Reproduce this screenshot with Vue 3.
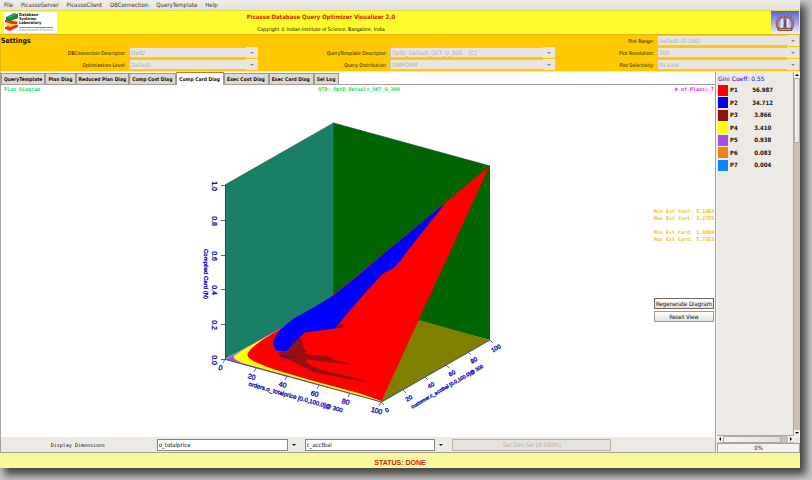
<script setup>
import { ref } from 'vue'

const menus = ['File', 'PicassoServer', 'PicassoClient', 'DBConnection', 'QueryTemplate', 'Help']

const settings = [
  { id: 'range', label: 'Plot Range:', value: 'Default (0-100)', area: 'c1' },
  { id: 'conn', label: 'DBConnection Descriptor:', value: 'OptD', area: 'a2' },
  { id: 'qt', label: 'QueryTemplate Descriptor:', value: 'OptD_Default_Q07_U_300\u00a0\u00a0\u00a0 [C]', area: 'b2' },
  { id: 'res', label: 'Plot Resolution:', value: '300', area: 'c2' },
  { id: 'opt', label: 'Optimization Level:', value: 'Default', area: 'a3' },
  { id: 'dist', label: 'Query Distribution:', value: 'UNIFORM', area: 'b3' },
  { id: 'sel', label: 'Plot Selectivity:', value: 'Picasso', area: 'c3' },
]

const tabs = ['QueryTemplate', 'Plan Diag', 'Reduced Plan Diag', 'Comp Cost Diag', 'Comp Card Diag', 'Exec Cost Diag', 'Exec Card Diag', 'Sel Log']
const active = ref('Comp Card Diag')

const plans = [
  { name: 'P1', value: '56.987', color: '#ff0000' },
  { name: 'P2', value: '34.712', color: '#0000f0' },
  { name: 'P3', value: '3.866', color: '#961010' },
  { name: 'P4', value: '3.410', color: '#ffff00' },
  { name: 'P5', value: '0.938', color: '#a552d8' },
  { name: 'P6', value: '0.083', color: '#ec860c' },
  { name: 'P7', value: '0.004', color: '#0a86ff' },
]

const zTicks = [
  { t: '1.0', y: 185 }, { t: '0.8', y: 220 }, { t: '0.6', y: 255 },
  { t: '0.4', y: 289 }, { t: '0.2', y: 324 }, { t: '0.0', y: 359 },
]
const xTicks = [
  { t: '0', x: 225, y: 359 }, { t: '20', x: 256, y: 368 }, { t: '40', x: 287, y: 376 },
  { t: '60', x: 319, y: 385 }, { t: '80', x: 350, y: 393 }, { t: '100', x: 381, y: 402 },
]
const yTicks = [
  { t: '0', x: 381, y: 402 }, { t: '20', x: 403, y: 390 }, { t: '40', x: 425, y: 377 },
  { t: '60', x: 446, y: 365 }, { t: '80', x: 468, y: 352 }, { t: '100', x: 490, y: 340 },
]
</script>

<template>
  <div class="window">
    <nav class="menubar">
      <button v-for="m in menus" :key="m" type="button">{{ m }}</button>
    </nav>

    <header class="banner">
      <div class="lab">
        <svg class="lab-mark" viewBox="0 0 14 18" aria-hidden="true">
          <path d="M0 14l8-3 5 1v2l-8 4-5-2z" fill="#e03a2c" />
          <path d="M1 10l9-3 3 1v3l-8 3-4-2z" fill="#f2d43a" />
          <path d="M0 7l4 0 8 2v2l-5 0-7-2z" fill="#d8342c" />
          <path d="M1 4l8-4 4 1v4l-8 3-4-1z" fill="#35a04c" />
          <path d="M1 4l4 1 8-4v4l-8 3-4-1z" fill="#23813a" />
        </svg>
        <div class="lab-text">
          <b>Database</b><b>Systems</b><b>Laboratory</b>
          <span>Indian Institute of Science</span>
        </div>
      </div>
      <div class="titles">
        <h1>Picasso Database Query Optimizer Visualizer 2.0</h1>
        <p>Copyright © Indian Institute of Science, Bangalore, India</p>
      </div>
      <svg class="crest" viewBox="0 0 28 23" aria-hidden="true">
        <defs>
          <linearGradient id="sky" x1="0" y1="0" x2="0" y2="1">
            <stop offset="0" stop-color="#5a5cd8" />
            <stop offset="1" stop-color="#f0f0ff" />
          </linearGradient>
        </defs>
        <rect width="28" height="23" fill="url(#sky)" />
        <path d="M8 18a8 8 0 1 1 12 0" fill="none" stroke="#8a5a48" stroke-width="2.6" />
        <path d="M8 18a8 8 0 1 1 12 0" fill="none" stroke="#d9b49c" stroke-width="0.8" stroke-dasharray="2 1" />
        <path d="M11 8v8M17 8v8" stroke="#e8e0f0" stroke-width="2" />
        <path d="M14 4l1.500 12h-3z" fill="#7a4a40" />
        <path d="M6 17h5l3-1 3 1h5l-1 3H7z" fill="#7d5648" />
        <path d="M8 18.500h12" stroke="#d8b090" stroke-width="0.8" />
      </svg>
    </header>

    <section class="settings">
      <h2>Settings</h2>
      <template v-for="s in settings" :key="s.id">
        <label :for="s.id" :class="['s-label', 'l-' + s.area]">{{ s.label }}</label>
        <div :class="['combo', 'off', 'f-' + s.area]">
          <select :id="s.id" disabled><option>{{ s.value }}</option></select>
          <svg viewBox="0 0 6 4" aria-hidden="true"><path d="M1 1h4L3 3z" /></svg>
        </div>
      </template>
    </section>

    <div class="work">
      <main class="left">
        <div class="tabs" role="tablist">
          <button
            v-for="t in tabs" :key="t" type="button" role="tab"
            :class="{ on: t === active }" :aria-selected="t === active" @click="active = t"
          >{{ t }}</button>
        </div>

        <div class="diagram">
          <div class="caption">
            <span class="green">Plan Diagram</span>
            <span class="green">QTD: OptD_Default_Q07_U_300</span>
            <span class="count"># of Plans: 7</span>
          </div>
          <div class="canvas">
            <svg class="plot" viewBox="1 93 653 344">
              <polygon points="225,185 334,123 334,300 225,359" fill="#1a7f67" />
              <polygon points="333.5,123 490,166 490,340 333.5,300" fill="#006400" />
              <polygon points="419,320 490,340 382,402 370,390" fill="#808000" />
              <path d="M225 185L333.5 123L490 166" fill="none" stroke="#114b35" stroke-width="0.7" />
              <polygon points="225,359.5 300,317 381.500,402" fill="#a552d8" />
              <path d="M325 302L300 317.500C275 333 240 350 234 356Q232 359 242 363L381.500 401.500L340 350Z" fill="#ffff00" />
              <path d="M489.500 166L445 203L333 295.500L303 316C280 329 247 347 247.500 355C248 361 268 368 310 380L360 393.500L381.500 401Z" fill="#ff0000" />
              <path d="M445.500 202.700L376.500 260L360 274L333.500 295.500L313 307.700L293 319L282 328Q272 338 273.500 345L276 350.500L286.500 351.500L297 340L305 332.500L335 328.500L347 314L350 310.500L365 293L377 280L383 273.500L393 268.500L400 261.500L407 251.500L440 210Z" fill="#0000ff" />
              <path d="M335 328.500L340 323.500L345 325.500L343 327.500Z" fill="#961010" />
              <path d="M300 337L303.500 344.500L302 346L307 351.500L304 352.500L310 355L325 356L333 357.500L332 359.500L350 363.500L348 364.500L307 359.500L305 361.500L313 366.500L323 370.500L350 376.500L367 381.500L360 381L330 375.500L313 372L300 365L280 356L278 352L286.500 351.500Z" fill="#961010" />
              <path d="M280 356L293 357.500" stroke="#1010c0" stroke-width="0.8" />
              <path d="M225.500 185V359.500L381.500 402L490 340" fill="none" stroke="#2c3c78" stroke-width="0.8" />
              <g class="ticks">
                <path v-for="z in zTicks" :key="z.t" :d="`M221 ${z.y + 0.5}h4`" />
                <path v-for="x in xTicks" :key="x.t" :d="`M${x.x} ${x.y}l-2 4`" />
                <path v-for="y in yTicks" :key="y.t" :d="`M${y.x} ${y.y}l3 3`" />
              </g>
              <g class="axis">
                <text v-for="z in zTicks" :key="z.t" class="big" :transform="`translate(212 ${z.y + 1}) rotate(90)`">{{ z.t }}</text>
                <text v-for="x in xTicks" :key="x.t" class="big" :transform="`translate(${x.x - 5} ${x.y + 11}) rotate(16)`">{{ x.t }}</text>
                <text v-for="y in yTicks" :key="y.t" :transform="`translate(${y.x + 7} ${y.y + 10}) rotate(-30)`">{{ y.t }}</text>
                <text transform="translate(204 274) rotate(90)">Compiled Card (N)</text>
                <text transform="translate(295 399) rotate(16)">orders.o_totalprice [0.0,100.0]@ 300</text>
                <text class="small" transform="translate(448 388) rotate(-30)">customer.c_acctbal [0.0,100.0]@ 300</text>
              </g>
            </svg>
            <aside class="side">
              <p>Min Est Cost: 5.14E4<br>Max Est Cost: 3.27E5</p>
              <p>Min Est Card: 1.00E0<br>Max Est Card: 5.73E3</p>
              <button type="button" class="focus">Regenerate Diagram</button>
              <button type="button">Reset View</button>
            </aside>
          </div>
        </div>

        <div class="dims">
          <span class="dims-label">Display Dimensions</span>
          <div class="combo">
            <select aria-label="First dimension"><option>o_totalprice</option></select>
            <svg viewBox="0 0 6 4" aria-hidden="true"><path d="M1 1h4L3 3z" /></svg>
          </div>
          <div class="combo">
            <select aria-label="Second dimension"><option>c_acctbal</option></select>
            <svg viewBox="0 0 6 4" aria-hidden="true"><path d="M1 1h4L3 3z" /></svg>
          </div>
          <button type="button" disabled>Set Dim Sel [0-100%]</button>
        </div>
      </main>

      <aside class="legend">
        <div class="legend-row">
          <div class="legend-body">
            <p class="gini">Gini Coeff: 0.55</p>
            <table>
              <tbody>
                <tr v-for="p in plans" :key="p.name">
                  <td><i :style="{ background: p.color }"></i></td>
                  <td>{{ p.name }}</td>
                  <td class="num">{{ p.value }}</td>
                </tr>
              </tbody>
            </table>
          </div>
          <div class="vbar">
            <svg viewBox="0 0 6 6" aria-hidden="true"><path d="M1 4h4L3 2z" /></svg>
            <div class="thumb"></div>
            <div class="track"></div>
            <svg viewBox="0 0 6 6" aria-hidden="true"><path d="M1 2h4L3 4z" /></svg>
          </div>
        </div>
        <div class="hbar">
          <svg viewBox="0 0 6 6" aria-hidden="true"><path d="M4 1v4L2 3z" /></svg>
          <div class="thumb"></div>
          <div class="track"></div>
          <svg viewBox="0 0 6 6" aria-hidden="true"><path d="M2 1v4L4 3z" /></svg>
        </div>
        <div class="progress" role="progressbar" aria-valuenow="0">0%</div>
      </aside>
    </div>

    <footer class="status">STATUS: DONE</footer>
  </div>
</template>

<style>
html {
  background: #c9c9c9;
}
body {
  overflow: hidden;
}
</style>

<style scoped>
* {
  box-sizing: border-box;
}
.window {
  display: flex;
  flex-direction: column;
  min-height: calc(100vh - 12px);
  margin: 0 12px 12px 0;
  background: #edeae6;
  box-shadow: 5px 6px 8px 1px #444;
  font-family: "DejaVu Sans Condensed", "DejaVu Sans", sans-serif;
  font-size: 6px;
  line-height: 8px;
  color: #111;
}
h1, h2, p {
  margin: 0;
  font-size: inherit;
}
button, select {
  font: inherit;
  color: inherit;
  margin: 0;
  padding: 0;
  border-radius: 0;
}
.menubar {
  display: flex;
  gap: 8px;
  height: 10px;
  padding-left: 4px;
  background: linear-gradient(#f0eeeb, #e4e0dc);
}
.menubar button {
  border: 0;
  background: none;
  color: #333;
}
.banner {
  display: flex;
  align-items: center;
  height: 24px;
  padding: 0 1px 0 4px;
  background: #fcfc2c;
  border-top: 1px solid #e4dc50;
}
.lab {
  display: flex;
  width: 53px;
  height: 21px;
  padding: 1px 0 0 1px;
  background: #fff;
  overflow: hidden;
}
.lab-mark {
  width: 14px;
  height: 18px;
  flex: none;
}
.lab-text {
  display: flex;
  flex-direction: column;
  font-size: 4px;
  line-height: 4px;
  white-space: nowrap;
}
.lab-text span {
  margin-top: 2px;
  border-top: 1px solid #d87060;
  font-family: "Liberation Sans", sans-serif;
  font-size: 3px;
  color: #888;
}
.titles {
  flex: 1;
  padding-right: 186px;
  text-align: center;
}
.titles h1 {
  margin-bottom: 4px;
  color: #e02008;
  font-size: 6px;
}
.titles p {
  font-size: 5px;
}
.crest {
  width: 28px;
  height: 23px;
}
.settings {
  display: grid;
  grid-template-columns: 128fr 129fr 132fr 165fr 102fr 142fr;
  grid-template-rows: repeat(3, 11px);
  row-gap: 1px;
  align-items: center;
  height: 38px;
  padding: 0;
  background: #ffc800;
  border: 1px solid #e0b810;
  border-bottom-color: #f8e890;
}
.settings h2 {
  grid-area: 1 / 1;
  font-size: 7px;
}
.s-label {
  padding-right: 3px;
  text-align: right;
  font-size: 5px;
}
.l-a2 { grid-area: 2 / 1; }
.f-a2 { grid-area: 2 / 2; }
.l-a3 { grid-area: 3 / 1; }
.f-a3 { grid-area: 3 / 2; }
.l-b2 { grid-area: 2 / 3; }
.f-b2 { grid-area: 2 / 4; }
.l-b3 { grid-area: 3 / 3; }
.f-b3 { grid-area: 3 / 4; }
.l-c1 { grid-area: 1 / 5; }
.f-c1 { grid-area: 1 / 6; }
.l-c2 { grid-area: 2 / 5; }
.f-c2 { grid-area: 2 / 6; }
.l-c3 { grid-area: 3 / 5; }
.f-c3 { grid-area: 3 / 6; }
.combo {
  position: relative;
  height: 12px;
  padding-right: 12px;
}
.combo select {
  display: block;
  width: 100%;
  height: 100%;
  padding: 0 1px;
  appearance: none;
  border: 1px solid #8c8680;
  background: #fff;
  opacity: 1;
}
.combo svg {
  position: absolute;
  right: 3px;
  top: 4px;
  width: 6px;
  height: 4px;
  fill: #111;
}
.combo.off {
  height: 11px;
  background: #e9e5e0;
}
.combo.off select {
  border: 1px solid #c8c2ba;
  border-right: 0;
  background: #e9e5e0;
  color: #b4aea6;
}
.combo.off svg {
  fill: #8c8880;
}
.work {
  display: flex;
  flex: 1;
}
.left {
  display: flex;
  flex: 1;
  flex-direction: column;
  min-width: 0;
  border: solid #a8a098;
  border-width: 0 1px 1px 1px;
}
.tabs {
  display: flex;
  align-items: flex-end;
  height: 13px;
  background: #fff;
  border-bottom: 1px solid #a8a098;
}
.tabs button {
  height: 11px;
  padding: 0 2px;
  border: 1px solid #a09890;
  border-bottom: 0;
  background: #dcd7d1;
  font-weight: bold;
  font-size: 5px;
  white-space: nowrap;
}
.tabs button:nth-child(n + 4) {
  padding: 0 3px 0 2px;
}
.tabs .on {
  height: 13px;
  margin-bottom: -1px;
  border-top-color: #c07840;
  background: #fff;
}
.diagram {
  display: flex;
  flex: 1;
  flex-direction: column;
  background: #fff;
}
.caption {
  display: grid;
  grid-template-columns: 1fr auto 1fr;
  padding: 0 1px 0 3px;
  font-family: "DejaVu Sans Mono", monospace;
  font-size: 5px;
  font-weight: bold;
}
.green {
  color: #10d868;
}
.count {
  color: #e818e8;
  text-align: right;
}
.canvas {
  display: flex;
  flex: 1;
}
.plot {
  flex: 1;
  min-width: 0;
  max-height: 100%;
}
.ticks {
  stroke: #3838b0;
  stroke-width: 0.8;
  fill: none;
}
.axis {
  fill: #0000b8;
  stroke: #0000b8;
  stroke-width: 0.3;
  font-family: "Liberation Sans", sans-serif;
  font-size: 6px;
  text-anchor: middle;
}
.axis .small {
  font-size: 5px;
}
.axis .big {
  font-size: 7px;
}
.side {
  display: flex;
  flex-direction: column;
  gap: 2px;
  width: 61px;
  padding: 115px 1px 0 0;
}
.side p {
  margin-bottom: 5px;
  color: #f4c010;
  font-family: "DejaVu Sans Mono", monospace;
  font-size: 5px;
  font-weight: bold;
  line-height: 7px;
  white-space: nowrap;
}
.side p + p {
  margin-bottom: 53px;
}
.side button {
  height: 11px;
  border: 1px solid #a09890;
  background: linear-gradient(#fff, #e6e2dd);
  white-space: nowrap;
}
.side .focus {
  border-color: #706860;
}
.dims {
  display: grid;
  grid-template-columns: 151fr 143fr 143fr 159fr 99fr;
  column-gap: 5px;
  align-items: center;
  height: 15px;
}
.dims-label {
  padding-left: 3px;
  font-family: "DejaVu Sans Mono", monospace;
  font-size: 5px;
  text-align: center;
}
.dims button {
  height: 12px;
  border: 1px solid #b8b0a8;
  background: #e6e2dd;
  color: #b4aea6;
}
.legend {
  display: flex;
  flex-direction: column;
  width: 84px;
  border-left: 1px solid #f8f6f4;
}
.legend-row {
  display: flex;
  flex: 1;
}
.legend-body {
  flex: 1;
  border-right: 1px solid #b0a8a0;
  border-bottom: 1px solid #b0a8a0;
}
.gini {
  padding: 3px 0 1px 1px;
  color: #1010c0;
  font-family: "DejaVu Sans", sans-serif;
}
.legend table {
  border-collapse: collapse;
  font-weight: bold;
}
.legend td {
  height: 12px;
  padding: 0 0 0 1px;
}
.legend tr:nth-child(even) td {
  height: 13px;
}
.legend i {
  display: block;
  width: 10px;
  height: 11px;
  margin-right: 1px;
}
.legend .num {
  width: 38px;
  padding-left: 12px;
  text-align: center;
}
.vbar {
  display: flex;
  flex-direction: column;
  width: 6px;
  background: #cbbfb4;
}
.vbar svg, .hbar svg {
  flex: none;
  width: 6px;
  height: 6px;
  background: #f4f2f0;
}
.thumb {
  background: linear-gradient(90deg, #f8f6f4, #e2ded8);
  border: 1px solid #b0a8a0;
}
.vbar .thumb {
  flex: 63;
}
.vbar .track {
  flex: 289;
}
.hbar {
  display: flex;
  height: 7px;
  margin-right: 6px;
  background: #cbbfb4;
}
.hbar .thumb {
  flex: 56;
}
.hbar .track {
  flex: 7;
}
.progress {
  height: 10px;
  border: 1px solid #a8a098;
  background: #f6f4f2;
  text-align: center;
}
.status {
  height: 15px;
  padding-top: 6px;
  background: #f9f79c;
  color: #d42010;
  font-family: "Liberation Sans", sans-serif;
  font-weight: bold;
  font-size: 7px;
  line-height: 8px;
  text-align: center;
}
</style>
